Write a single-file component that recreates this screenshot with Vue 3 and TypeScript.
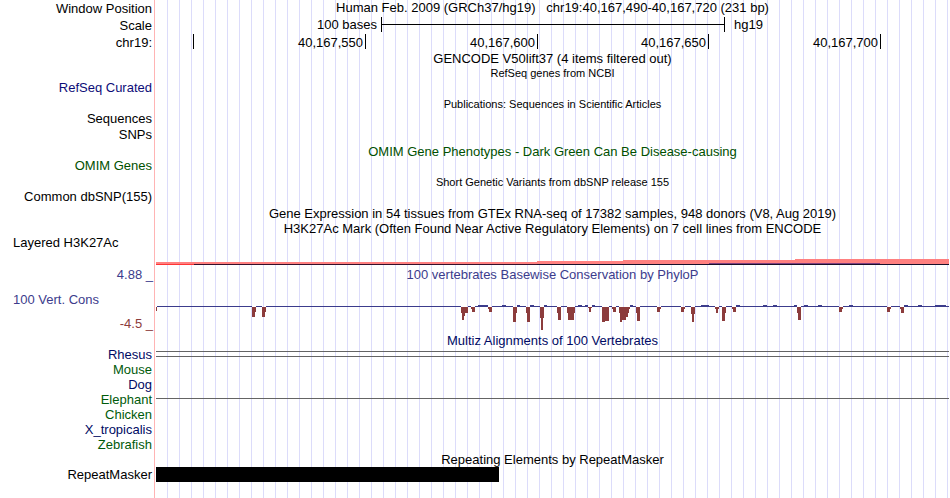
<script setup lang="ts">
interface Row {
  kind: 'title' | 'label'
  text: string
  tone?: string
  size?: string
}

interface Box {
  x: number
  y: number
  w: number
  h: number
}

const ticks: string[] = ['', '40,167,550', '40,167,600', '40,167,650', '40,167,700']

const upperRows: Row[] = [
  { kind: 'title', text: 'GENCODE V50lift37 (4 items filtered out)', size: 'tall' },
  { kind: 'title', text: 'RefSeq genes from NCBI', size: 'small' },
  { kind: 'label', text: 'RefSeq Curated', tone: 'refseq', size: 'spaced' },
  { kind: 'title', text: 'Publications: Sequences in Scientific Articles', size: 'small' },
  { kind: 'label', text: 'Sequences', size: 'snug' },
  { kind: 'label', text: 'SNPs', size: 'spaced' },
  { kind: 'title', text: 'OMIM Gene Phenotypes - Dark Green Can Be Disease-causing', tone: 'omim' },
  { kind: 'label', text: 'OMIM Genes', tone: 'omim', size: 'spaced' },
  { kind: 'title', text: 'Short Genetic Variants from dbSNP release 155', size: 'small' },
  { kind: 'label', text: 'Common dbSNP(155)', size: 'spaced' },
  {
    kind: 'title',
    text: 'Gene Expression in 54 tissues from GTEx RNA-seq of 17382 samples, 948 donors (V8, Aug 2019)',
    size: 'tall',
  },
  {
    kind: 'title',
    text: 'H3K27Ac Mark (Often Found Near Active Regulatory Elements) on 7 cell lines from ENCODE',
  },
]

const species: { name: string; tone: string; lines: number[] }[] = [
  { name: 'Rhesus', tone: 'navy', lines: [4, 9] },
  { name: 'Mouse', tone: 'green', lines: [] },
  { name: 'Dog', tone: 'navy', lines: [] },
  { name: 'Elephant', tone: 'green', lines: [6] },
  { name: 'Chicken', tone: 'green', lines: [] },
  { name: 'X_tropicalis', tone: 'navy', lines: [] },
  { name: 'Zebrafish', tone: 'green', lines: [] },
]

// Plot coordinates share one horizontal scale: 793 units for the whole window.
const ORIGIN = 156
const SPAN = 793

// Each dip is a list of [start, end, depth] blocks hanging below the baseline.
const dips: [number, number, number][][] = [
  [[156, 157, 4]],
  [[252, 256, 5], [252, 255, 10]],
  [[262, 266, 5], [262, 265, 10]],
  [[461, 468, 6], [462, 466, 6], [462, 465, 9], [462, 464, 13]],
  [[471, 475, 2], [472, 475, 5]],
  [[488, 492, 2], [489, 492, 5]],
  [[513, 517, 6], [513, 516, 15]],
  [[526, 530, 6], [527, 530, 15]],
  [[540, 544, 11], [541, 543, 23]],
  [[557, 561, 6], [558, 561, 13]],
  [[567, 575, 6], [568, 574, 13]],
  [[588, 592, 1], [589, 591, 5]],
  [[602, 609, 14], [602, 605, 15]],
  [[612, 616, 2], [613, 616, 5]],
  [[619, 630, 2], [619, 629, 6], [620, 628, 10], [620, 626, 13], [620, 622, 15]],
  [[636, 640, 6], [637, 640, 14]],
  [[657, 661, 2], [657, 660, 5]],
  [[681, 685, 2], [681, 684, 5]],
  [[691, 695, 7], [692, 694, 15]],
  [[715, 719, 2], [716, 718, 6]],
  [[722, 726, 6], [722, 725, 14]],
  [[732, 736, 2], [733, 736, 5]],
  [[797, 801, 6], [798, 801, 13]],
  [[839, 843, 2], [839, 842, 5]],
  [[887, 891, 2], [887, 890, 5]],
  [[900, 904, 2], [901, 904, 6]],
]

const peaks: [number, number][] = [
  [478, 488], [502, 506], [517, 520], [530, 534], [544, 547], [578, 582], [585, 588],
  [592, 595], [630, 633], [701, 709], [736, 740], [763, 767], [773, 777], [794, 797],
  [804, 808], [818, 822], [849, 853], [904, 908], [918, 922], [935, 946],
]

const BASE = 24

const dipBoxes: Box[] = dips.flat().map(([a, b, depth]) => ({
  x: a - ORIGIN, y: BASE + 1, w: b - a, h: depth,
}))

const peakBoxes: Box[] = peaks.map(([a, b]) => ({ x: a - ORIGIN, y: BASE - 1, w: b - a, h: 1 }))

// The baseline is interrupted wherever a dip begins.
const baseBoxes: Box[] = dips.map((dip, i) => {
  const start = dip[0][1]
  const end = i + 1 < dips.length ? dips[i + 1][0][0] : ORIGIN + SPAN
  return { x: start - ORIGIN, y: BASE, w: end - start, h: 1 }
})
</script>

<template>
  <main class="browser">
    <header class="row head">
      <div class="label">Window Position</div>
      <div class="title">Human Feb. 2009 (GRCh37/hg19)&nbsp;&nbsp; chr19:40,167,490-40,167,720 (231 bp)</div>
    </header>
    <div class="row head">
      <div class="label">Scale</div>
      <div class="scale">
        <span class="bases">100 bases</span>
        <span class="ruler"></span>
        <span class="assembly">hg19</span>
      </div>
    </div>
    <div class="row head">
      <div class="label">chr19:</div>
      <div class="ticks">
        <span v-for="(tick, i) in ticks" :key="i" class="tick">{{ tick }}</span>
      </div>
    </div>

    <div v-for="row in upperRows" :key="row.text" class="row" :class="[row.kind + '-row', row.size]">
      <div :class="[row.kind, row.tone]">{{ row.text }}</div>
    </div>

    <section class="row histone">
      <div class="label left">Layered H3K27Ac</div>
      <svg class="plot" viewBox="0 0 793 32" preserveAspectRatio="none" aria-hidden="true">
        <path fill="#ff8080" d="M0 27H381V26H467V25H639V24H793V29H0Z" />
        <rect x="553" y="28" width="171" height="1" fill="#804080" />
        <rect x="0" y="29" width="38" height="1" fill="#ff3535" />
        <rect x="38" y="29" width="343" height="1" fill="#36102a" />
        <rect x="381" y="29" width="412" height="1" fill="#18102a" />
      </svg>
    </section>

    <section class="row conservation">
      <div class="axis">
        <div class="label blue limit">4.88 _</div>
        <div class="label blue left">100 Vert. Cons</div>
        <div class="label red limit">-4.5 _</div>
      </div>
      <div class="wiggle">
        <div class="title blue">100 vertebrates Basewise Conservation by PhyloP</div>
        <svg class="plot" viewBox="0 0 793 51" preserveAspectRatio="none" aria-hidden="true">
          <g fill="#3c3c8c">
            <rect v-for="b in baseBoxes" :key="'l' + b.x" :x="b.x" :y="b.y" :width="b.w" :height="b.h" />
            <rect v-for="b in peakBoxes" :key="'p' + b.x" :x="b.x" :y="b.y" :width="b.w" :height="b.h" />
          </g>
          <g fill="#8c3c3c">
            <rect v-for="(b, i) in dipBoxes" :key="i" :x="b.x" :y="b.y" :width="b.w" :height="b.h" />
          </g>
        </svg>
      </div>
    </section>

    <div class="row title-row">
      <div class="title navy">Multiz Alignments of 100 Vertebrates</div>
    </div>
    <div v-for="s in species" :key="s.name" class="row label-row">
      <div class="label" :class="s.tone">{{ s.name }}</div>
      <svg class="plot" viewBox="0 0 793 15" preserveAspectRatio="none" aria-hidden="true">
        <rect v-for="y in s.lines" :key="y" x="0" :y="y" width="793" height="1" fill="#646464" />
      </svg>
    </div>

    <div class="row title-row tall">
      <div class="title">Repeating Elements by RepeatMasker</div>
    </div>
    <div class="row label-row">
      <div class="label">RepeatMasker</div>
      <svg class="plot" viewBox="0 0 793 15" preserveAspectRatio="none" aria-hidden="true">
        <rect x="0" y="0" width="343" height="15" fill="#000000" />
      </svg>
    </div>
  </main>
</template>

<style>
body {
  margin: 0;
  background: #ffffff;
}
</style>

<style scoped>
.browser {
  box-sizing: border-box;
  min-height: 100vh;
  padding-right: 1px;
  overflow: hidden;
  color: #000000;
  font-family: "Liberation Sans", Arial, Helvetica, sans-serif;
  font-size: 13px;
  line-height: 15px;
  white-space: nowrap;
  background-image:
    linear-gradient(#ffb4b4, #ffb4b4),
    repeating-linear-gradient(to right, transparent 0 11px, #dcdcfa 11px 12px);
  background-position: 154px 0, 156px 0;
  background-size: 1px 100%, 100% 100%;
  background-repeat: no-repeat;
}

.row {
  display: grid;
  grid-template-columns: 156px minmax(0, 1fr);
}

.head {
  height: 17px;
}

.head .label {
  line-height: 17px;
}

.title-row {
  height: 14px;
}

.label-row {
  height: 15px;
}

.title-row.tall {
  height: 15px;
}

.label-row.snug {
  height: 16px;
}

.label-row.spaced {
  height: 17px;
}

.title-row.small {
  font-size: 11px;
  line-height: 14px;
}

.label {
  box-sizing: border-box;
  padding-right: 4px;
  text-align: right;
}

.label.left {
  padding-left: 13px;
  text-align: left;
}

.label.limit {
  padding-right: 3px;
}

.title {
  grid-column: 2;
  text-align: center;
}

.plot {
  display: block;
  width: 100%;
  height: 100%;
  shape-rendering: crispEdges;
}

.scale {
  display: grid;
  grid-template-columns: 225fr 344fr 224fr;
}

.bases {
  padding-right: 4px;
  text-align: right;
}

.ruler {
  height: 15px;
  border: solid #000000;
  border-width: 0 1px;
  background: linear-gradient(#000000, #000000) 0 7px / 100% 1px no-repeat;
}

.assembly {
  padding-left: 9px;
}

.ticks {
  display: grid;
  grid-template-columns: 38fr 172fr 172fr 171fr 172fr 68fr;
}

.tick {
  height: 15px;
  padding-right: 2px;
  border-right: 1px solid #000000;
  line-height: 17px;
  text-align: right;
}

.histone {
  height: 32px;
}

.conservation {
  height: 66px;
}

.axis {
  display: flex;
  flex-direction: column;
  justify-content: space-between;
  padding-bottom: 2px;
}

.wiggle {
  display: grid;
  grid-template-rows: 15px 51px;
}

.wiggle .title {
  grid-column: 1;
}

.refseq {
  color: #0c0c78;
}

.omim {
  color: #005000;
}

.blue {
  color: #3c3c8c;
}

.red {
  color: #8c3c3c;
}

.navy {
  color: #000a64;
}

.green {
  color: #005a0a;
}
</style>
